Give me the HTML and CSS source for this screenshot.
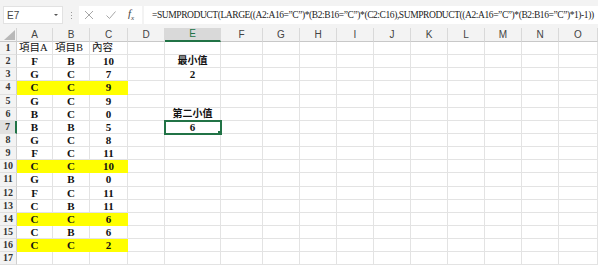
FILE: index.html
```html
<!DOCTYPE html>
<html>
<head>
<meta charset="utf-8">
<link rel="stylesheet" href="styles.css">
</head>
<body>
<div class="topbar">
  <div class="namebox"><span class="nb-text">E7</span><span class="nb-arrow"></span></div>
  <div class="vdots"><i></i><i></i><i></i></div>
  <div class="fxbox">
    <svg class="ico" width="12" height="12" viewBox="0 0 12 12"><path d="M2 2 L10 10 M10 2 L2 10" stroke="#a6a6a6" stroke-width="1" fill="none"/></svg>
    <svg class="ico" width="12" height="12" viewBox="0 0 12 12"><path d="M1.5 6.5 L4.5 9.5 L10.5 2.5" stroke="#a6a6a6" stroke-width="1" fill="none"/></svg>
    <span class="fx">f<sub>x</sub></span>
  </div>
  <div class="formula">=SUMPRODUCT(LARGE((A2:A16=”C”)*(B2:B16=”C”)*(C2:C16),SUMPRODUCT((A2:A16=”C”)*(B2:B16=”C”)*1)-1))</div>
</div>
<div class="sheet">
  <span class="corner"><svg width="11" height="10" viewBox="0 0 11 10"><polygon points="11,0 11,10 0,10" fill="#b8b8b8"/></svg></span>
  <span class="ch">A</span><span class="ch">B</span><span class="ch">C</span><span class="ch">D</span><span class="ch sel">E</span><span class="ch">F</span><span class="ch">G</span><span class="ch">H</span><span class="ch">I</span><span class="ch">J</span><span class="ch">K</span><span class="ch">L</span><span class="ch">M</span><span class="ch">N</span><span class="ch">O</span>

  <span class="rh">1</span><span class="t">項目A</span><span class="t">項目B</span><span class="t">內容</span><span></span><span></span><span></span><span></span><span></span><span></span><span></span><span></span><span></span><span></span><span></span><span></span>
  <span class="rh">2</span><span>F</span><span>B</span><span>10</span><span></span><span class="k">最小值</span><span></span><span></span><span></span><span></span><span></span><span></span><span></span><span></span><span></span><span></span>
  <span class="rh">3</span><span>G</span><span>C</span><span>7</span><span></span><span>2</span><span></span><span></span><span></span><span></span><span></span><span></span><span></span><span></span><span></span><span></span>
  <span class="rh">4</span><span class="y">C</span><span class="y">C</span><span class="y">9</span><span></span><span></span><span></span><span></span><span></span><span></span><span></span><span></span><span></span><span></span><span></span><span></span>
  <span class="rh">5</span><span>G</span><span>C</span><span>9</span><span></span><span></span><span></span><span></span><span></span><span></span><span></span><span></span><span></span><span></span><span></span><span></span>
  <span class="rh">6</span><span>B</span><span>C</span><span>0</span><span></span><span class="k">第二小值</span><span></span><span></span><span></span><span></span><span></span><span></span><span></span><span></span><span></span><span></span>
  <span class="rh rsel">7</span><span>B</span><span>B</span><span>5</span><span></span><span class="active">6</span><span></span><span></span><span></span><span></span><span></span><span></span><span></span><span></span><span></span><span></span>
  <span class="rh">8</span><span>G</span><span>C</span><span>8</span><span></span><span></span><span></span><span></span><span></span><span></span><span></span><span></span><span></span><span></span><span></span><span></span>
  <span class="rh">9</span><span>F</span><span>C</span><span>11</span><span></span><span></span><span></span><span></span><span></span><span></span><span></span><span></span><span></span><span></span><span></span><span></span>
  <span class="rh">10</span><span class="y">C</span><span class="y">C</span><span class="y">10</span><span></span><span></span><span></span><span></span><span></span><span></span><span></span><span></span><span></span><span></span><span></span><span></span>
  <span class="rh">11</span><span>G</span><span>B</span><span>0</span><span></span><span></span><span></span><span></span><span></span><span></span><span></span><span></span><span></span><span></span><span></span><span></span>
  <span class="rh">12</span><span>F</span><span>C</span><span>11</span><span></span><span></span><span></span><span></span><span></span><span></span><span></span><span></span><span></span><span></span><span></span><span></span>
  <span class="rh">13</span><span>C</span><span>B</span><span>11</span><span></span><span></span><span></span><span></span><span></span><span></span><span></span><span></span><span></span><span></span><span></span><span></span>
  <span class="rh">14</span><span class="y">C</span><span class="y">C</span><span class="y">6</span><span></span><span></span><span></span><span></span><span></span><span></span><span></span><span></span><span></span><span></span><span></span><span></span>
  <span class="rh">15</span><span>C</span><span>B</span><span>6</span><span></span><span></span><span></span><span></span><span></span><span></span><span></span><span></span><span></span><span></span><span></span><span></span>
  <span class="rh">16</span><span class="y">C</span><span class="y">C</span><span class="y">2</span><span></span><span></span><span></span><span></span><span></span><span></span><span></span><span></span><span></span><span></span><span></span><span></span>
  <span class="rh">17</span><span></span><span></span><span></span><span></span><span></span><span></span><span></span><span></span><span></span><span></span><span></span><span></span><span></span><span></span><span></span>
</div>
</body>
</html>
```

FILE: styles.css
```css
html, body {
  margin: 0;
  padding: 0;
  background: #ffffff;
  width: 598px;
  height: 265px;
  overflow: hidden;
}

.topbar {
  height: 28px;
  box-sizing: border-box;
  background: #f3f3f3;
  display: flex;
  align-items: flex-start;
  padding-top: 6px;
}

.namebox {
  margin-left: 3px;
  width: 60px;
  height: 18px;
  box-sizing: border-box;
  background: #ffffff;
  border: 1px solid #e2e2e2;
  display: flex;
  align-items: center;
  justify-content: space-between;
  padding: 0 4px 0 3px;
}

.nb-text {
  font: 10px "Liberation Sans", Arial, sans-serif;
  color: #444;
}

.nb-arrow {
  width: 0;
  height: 0;
  border-left: 2px solid transparent;
  border-right: 2px solid transparent;
  border-top: 2px solid #555;
}

.vdots {
  width: 16px;
  height: 18px;
  display: flex;
  flex-direction: column;
  align-items: center;
  justify-content: center;
  gap: 2px;
}

.vdots i {
  display: block;
  width: 1px;
  height: 1px;
  background: #9a9a9a;
}

.fxbox {
  width: 63px;
  height: 18px;
  background: #ffffff;
  display: flex;
  align-items: center;
  gap: 10px;
  padding-left: 4px;
  box-sizing: border-box;
}

.ico {
  display: block;
}

.fx {
  font: italic 11px "Liberation Serif", serif;
  color: #444;
  margin-left: 1px;
}

.fx sub {
  font-size: 7px;
}

.formula {
  margin-left: 2px;
  flex: 1;
  height: 18px;
  background: #ffffff;
  font: 9.5px/18px "Liberation Serif", "Times New Roman", serif;
  color: #222;
  padding-left: 8px;
  white-space: nowrap;
  overflow: hidden;
  letter-spacing: -0.42px;
}

.sheet {
  display: grid;
  grid-template-columns: 17px 36px 37px 38px 37px 56px 42px 37px 37px 37px 37px 37px 37px 37px 37px 1fr;
  grid-template-rows: 14px;
  grid-auto-rows: 13.15px;
}

.sheet > span {
  box-sizing: border-box;
  border-right: 1px solid #e3e3e3;
  border-bottom: 1px solid #e3e3e3;
  font: bold 11px/12px "Liberation Serif", "Noto Sans CJK TC", serif;
  color: #111;
  text-align: center;
  white-space: nowrap;
  overflow: hidden;
}

.sheet > span.corner {
  background: #f3f3f3;
  border-right: 1px solid #d4d4d4;
  border-bottom: 1px solid #c8c8c8;
  display: flex;
  align-items: flex-end;
  justify-content: flex-end;
  padding: 0 1px 1px 0;
}

.sheet > span.ch {
  background: #f3f3f3;
  font: 10px/13px "Liberation Sans", Arial, sans-serif;
  color: #444;
  border-right: 1px solid #d9d9d9;
  border-bottom: 1px solid #c8c8c8;
}

.sheet > span.ch.sel {
  background: #d9d9d9;
  color: #217346;
  border-bottom: 2px solid #217346;
  line-height: 12px;
}

.sheet > span.rh {
  background: #f3f3f3;
  font: bold 10px/12px "Liberation Serif", serif;
  color: #333;
  border-right: 1px solid #d0d0d0;
  border-bottom: 1px solid #e0e0e0;
}

.sheet > span.rh.rsel {
  background: #e1e1e1;
  border-right: 2px solid #217346;
}

.sheet > span.t {
  font-weight: normal;
  font-size: 10.5px;
  text-align: left;
  padding-left: 2px;
  font-family: "Liberation Serif", "Noto Sans CJK TC", serif;
}

.sheet > span.k {
  overflow: visible;
  font-size: 10px;
}

.sheet > span.y {
  background: #ffff00;
  border-right-color: #ffff00;
  border-bottom-color: #ffff00;
}

.sheet > span.active {
  position: relative;
  outline: 2px solid #217346;
  outline-offset: -1px;
  z-index: 2;
}

.sheet > span.active::after {
  content: "";
  position: absolute;
  right: -3px;
  bottom: -3px;
  width: 4px;
  height: 4px;
  background: #217346;
  border: 1px solid #ffffff;
}
```
